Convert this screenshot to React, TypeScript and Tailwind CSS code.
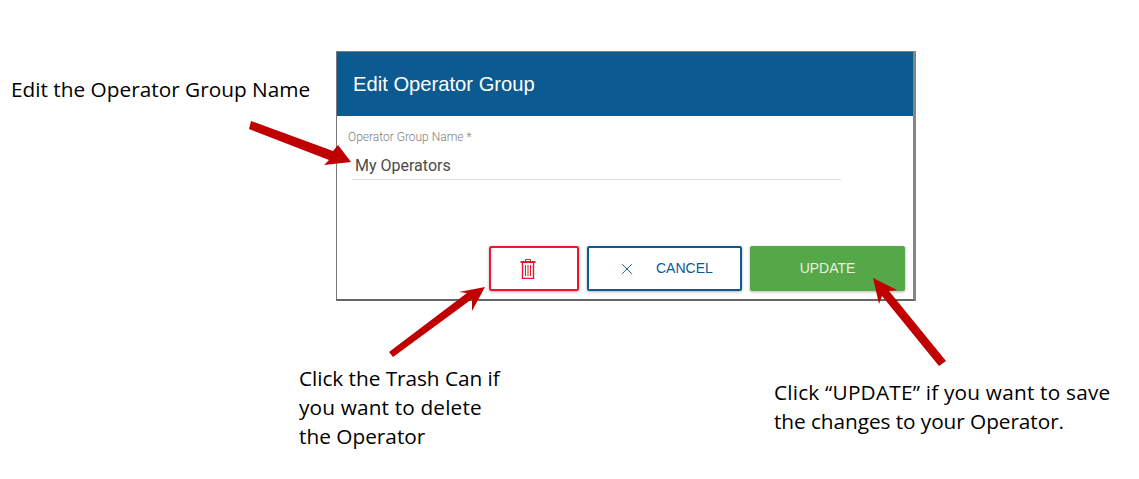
import React from 'react';
import { X } from 'lucide-react';

function TrashIcon() {
    return (
        <svg width="16" height="20" viewBox="0 0 16 20" fill="none" stroke="#f0142f" strokeWidth="1">
            <path d="M5.5 2.5V0.5H10.5V2.5" />
            <path d="M0.5 2.5H15.5" />
            <path d="M0.5 3.5H15.5" />
            <path d="M2.5 4V19.5H13.5V4" strokeWidth="1.4" />
            <path d="M5.5 6V17M8 6V17M10.5 6V17" />
        </svg>
    );
}

function Arrows() {
    return (
        <svg className="absolute left-0 top-0 pointer-events-none" width="1139" height="479" viewBox="0 0 1139 479" fill="#c00000">
            <polygon points="251,121 249,129 329,160 324,165 351,162 338,145 333,151" />
            <polygon points="389,352 393,357 472,299 472,311 485,287 459,292 467,293" />
            <polygon points="939,366 946,361 889,291 897,290 873,278 879,304 882,296" />
        </svg>
    );
}

export default function App() {
    const note = "absolute text-[20.8px] leading-[29px] text-black font-['Open_Sans',sans-serif]";

    return (
        <div className="relative w-[1139px] h-[479px] overflow-hidden bg-white pl-[336px] pt-[51px]">
            <div className="w-[580px] h-[250px] flex flex-col bg-white border-l border-t border-r-[3px] border-b-2 border-l-[#777777] border-t-[#808080] border-r-[#858585] border-b-[#666666] font-['Roboto',sans-serif]">
                <div className="h-[64px] shrink-0 flex items-center pl-[16px] bg-[#0b5a91] text-white text-[20.2px] font-['Liberation_Sans',sans-serif]">
                    Edit Operator Group
                </div>
                <div className="pl-[11px] pt-[14px] w-[504px]">
                    <div className="text-[12px] leading-[14px] font-light text-[#808080]">Operator Group Name *</div>
                    <div className="ml-[4px] mt-[7px] h-[29px] border-b border-[#dddddd] pl-[3px] text-[16px] leading-[29px] text-[#4a4a4a]">
                        My Operators
                    </div>
                </div>
                <div className="flex gap-2 mt-[66px] ml-[152px] font-['Liberation_Sans',sans-serif]">
                    <button className="w-[90px] h-[45px] flex items-center rounded-[2px] border-2 border-[#f0142f] pl-[29px] shadow-[0_1px_3px_rgba(0,0,0,0.3)]">
                        <TrashIcon />
                    </button>
                    <button className="w-[155px] h-[45px] flex items-center rounded-[2px] border-2 border-[#0b5a91] pl-[29px] text-[14px] text-[#0b5a91] shadow-[0_1px_3px_rgba(0,0,0,0.3)]">
                        <X size={18} strokeWidth={1.25} />
                        <span className="ml-[20px]">CANCEL</span>
                    </button>
                    <button className="w-[155px] h-[45px] flex items-center justify-center rounded-[2px] bg-[#55a747] text-[14px] text-[#e6f2e3] shadow-[0_1px_3px_rgba(0,0,0,0.3)]">
                        UPDATE
                    </button>
                </div>
            </div>

            <div className={`${note} left-[11px] top-[75px]`}>Edit the Operator Group Name</div>
            <div className={`${note} left-[299px] top-[364px] w-[240px]`}>
                <div className="tracking-[-0.05px]">Click the Trash Can if</div>
                <div className="tracking-[0.15px]">you want to delete</div>
                <div>the Operator</div>
            </div>
            <div className={`${note} left-[774px] top-[378px] w-[360px]`}>
                <div className="tracking-[0.2px]">Click “UPDATE” if you want to save</div>
                <div className="tracking-[-0.07px]">the changes to your Operator.</div>
            </div>
            <Arrows />
        </div>
    );
}
